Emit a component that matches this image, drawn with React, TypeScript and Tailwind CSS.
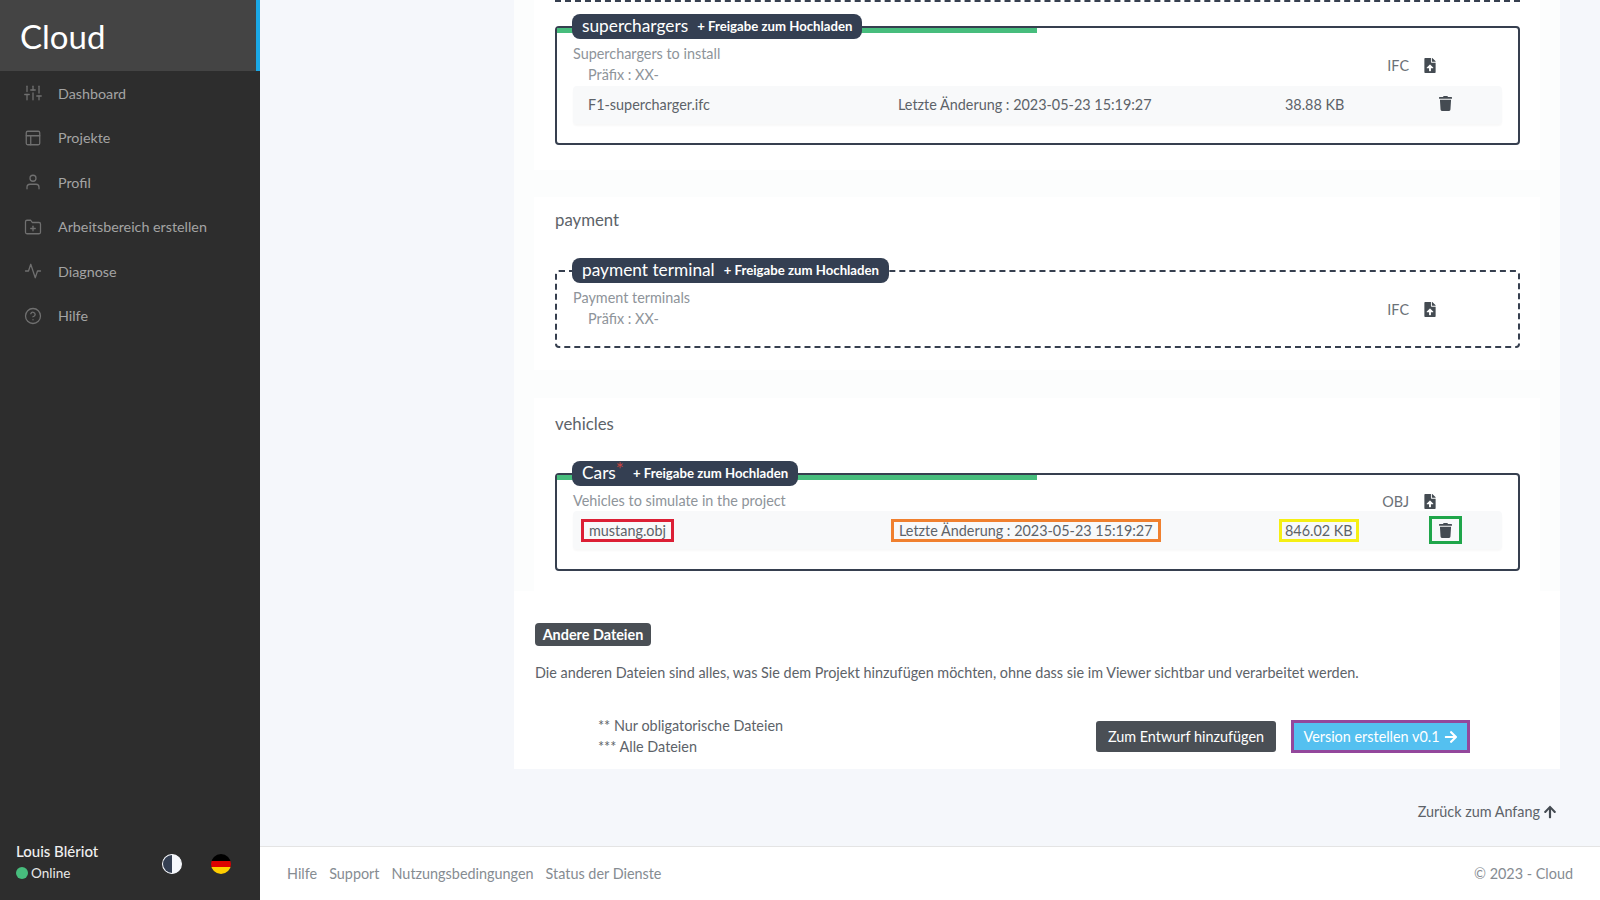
import { FiSliders, FiLayout, FiUser, FiFolderPlus, FiActivity, FiHelpCircle } from 'react-icons/fi';
import { FaFileUpload, FaArrowRight, FaArrowUp, FaTrash } from 'react-icons/fa';
import type { ReactNode } from 'react';

const navItems = [
  { label: 'Dashboard', icon: FiSliders },
  { label: 'Projekte', icon: FiLayout },
  { label: 'Profil', icon: FiUser },
  { label: 'Arbeitsbereich erstellen', icon: FiFolderPlus },
  { label: 'Diagnose', icon: FiActivity },
  { label: 'Hilfe', icon: FiHelpCircle },
];

const Sidebar = () => (
  <aside className="w-[260px] shrink-0 bg-[#2d2d2d] flex flex-col">
    <div className="h-[71px] shrink-0 bg-[#444444] border-r-4 border-[#1aa8e6] flex items-center pl-5">
      <span className="text-[33px] text-white pt-[2px]">Cloud</span>
    </div>
    <nav className="flex flex-col">
      {navItems.map((item) => (
        <div key={item.label} className="h-[44.5px] flex items-center pl-6 gap-[16px] text-[#a4a4a4] text-[14.3px]">
          <item.icon className="w-[18px] h-[18px] text-[#707070]" strokeWidth={1.7} />
          <span>{item.label}</span>
        </div>
      ))}
    </nav>
    <div className="mt-auto h-[64px] flex items-center pl-4 pb-2">
      <div className="w-[146px] pb-1 leading-[22px]">
        <div className="text-[15px] font-medium text-[#f0f0f0]">Louis Blériot</div>
        <div className="flex items-center gap-[3px] text-[13.5px] text-[#e8e8e8]">
          <span className="w-3 h-3 rounded-full bg-[#47bd7d]" />
          Online
        </div>
      </div>
      <svg viewBox="0 0 20 20" className="w-5 h-5">
        <circle cx="10" cy="10" r="9.4" fill="#f5f7fb" stroke="#f5f7fb" strokeWidth="1.2" />
        <path d="M10 1 A9 9 0 0 0 10 19 Z" fill="#343f52" />
      </svg>
      <div className="ml-[29px] w-5 h-5 rounded-full overflow-hidden flex flex-col">
        <div className="flex-1 bg-black" />
        <div className="flex-1 bg-[#dd0000]" />
        <div className="flex-1 bg-[#ffce00]" />
      </div>
    </div>
  </aside>
);

const Badge = ({ title, star }: { title: string; star?: boolean }) => (
  <div className="absolute left-[15px] -top-[14px] h-[25px] rounded-lg bg-[#343f52] text-white flex items-center px-[10px]">
    <span className="text-[17.3px] -mt-[1px]">
      {title}
      {star && <span className="inline-block -translate-y-[3px] text-[#c8443f] text-[19px] leading-none">*</span>}
    </span>
    <span className="ml-[9px] text-[13.2px] font-bold">+ Freigabe zum Hochladen</span>
  </div>
);

const FileRow = ({ children }: { children: ReactNode }) => (
  <div className="mx-4 h-[38px] flex items-center text-[14.4px] text-[#5d6369] bg-[#f8f9fa] rounded shadow-[0_2px_2px_rgba(0,0,0,0.03)] relative">
    {children}
  </div>
);

const UploadType = ({ type, top }: { type: string; top: string }) => (
  <div className={`absolute right-[82px] ${top} flex items-center text-[14.4px] text-[#6b7178]`}>
    <span>{type}</span>
    <FaFileUpload className="ml-[15px] w-3 h-[15px] text-[#444b52]" />
  </div>
);

const App = () => (
  <div className="w-[1600px] h-[900px] flex overflow-hidden bg-[#f5f7fb] font-['Lato','Noto_Sans',sans-serif]">
    <Sidebar />
    <div className="flex-1 flex flex-col">
      <main className="flex-1 pl-[254px] pr-[40px] flex flex-col">
        <div className="h-[769px] bg-white shrink-0 flex flex-col">
          <div className="bg-[#fcfdfd] h-[591px] shrink-0 px-5">
            {/* superchargers */}
            <section className="bg-white pl-[21px] pr-5 h-[170px]">
              <div className="border-b-2 border-dashed border-[#363f4f] h-[2px]" />
              <div className="mt-[24px] h-[119px] relative border-2 border-[#363f4f] rounded">
                <div className="absolute left-0 top-0 w-[480px] h-[5px] bg-[#47bd7d]" />
                <Badge title="superchargers" />
                <div className="pt-[15px] pl-[16px] text-[14.4px] text-[#8e949a] leading-[21px]">
                  <div>Superchargers to install</div>
                  <div className="pl-[15px]">Präfix : XX-</div>
                </div>
                <UploadType type="IFC" top="top-[27px]" />
                <div className="mt-[1px]">
                  <FileRow>
                    <span className="ml-[15px]">F1-supercharger.ifc</span>
                    <span className="absolute left-[325px]">Letzte Änderung : 2023-05-23 15:19:27</span>
                    <span className="absolute left-[712px]">38.88 KB</span>
                    <FaTrash className="absolute left-[866px] top-[10px] w-[13px] h-[15px] text-[#444b52]" />
                  </FileRow>
                </div>
              </div>
            </section>

            {/* payment */}
            <section className="bg-white pl-[21px] pr-5 mt-[27px] pt-3 h-[173px]">
              <h3 className="text-[16.8px] leading-[22px] text-[#5d6369]">payment</h3>
              <div className="mt-[39px] h-[78px] relative border-2 border-dashed border-[#363f4f] rounded">
                <Badge title="payment terminal" />
                <div className="pt-[15px] pl-[16px] text-[14.4px] text-[#8e949a] leading-[21px]">
                  <div>Payment terminals</div>
                  <div className="pl-[15px]">Präfix : XX-</div>
                </div>
                <UploadType type="IFC" top="top-[27px]" />
              </div>
            </section>

            {/* vehicles */}
            <section className="bg-white pl-[21px] pr-5 mt-[28px] pt-[15px] h-[193px]">
              <h3 className="text-[16.8px] leading-[22px] text-[#5d6369]">vehicles</h3>
              <div className="mt-[38px] h-[98px] relative border-2 border-[#363f4f] rounded">
                <div className="absolute left-0 top-0 w-[480px] h-[5px] bg-[#47bd7d]" />
                <Badge title="Cars" star />
                <div className="pt-[16px] pl-[16px] text-[14.4px] text-[#8e949a] leading-[20px]">
                  <div>Vehicles to simulate in the project</div>
                </div>
                <UploadType type="OBJ" top="top-[16px]" />
                <FileRow>
                  <span className="absolute left-[8px] px-[5px] border-[3px] border-[#dc1f35] leading-[17px]">mustang.obj</span>
                  <span className="absolute left-[318px] px-[5px] border-[3px] border-[#f0802f] leading-[17px]">Letzte Änderung : 2023-05-23 15:19:27</span>
                  <span className="absolute left-[706px] px-[3px] border-[3px] border-[#f5ef14] leading-[17px]">846.02 KB</span>
                  <span className="absolute left-[856px] w-[33px] h-[28px] border-[3px] border-[#1fa64a] flex items-center justify-center">
                    <FaTrash className="w-[13px] h-[15px] text-[#444b52]" />
                  </span>
                </FileRow>
              </div>
            </section>
          </div>

          <div className="ml-[21px] mt-[32px] h-[23px] w-[116px] rounded bg-[#4a4f55] text-white text-[14.4px] font-bold flex items-center justify-center shrink-0">Andere Dateien</div>
          <p className="ml-[21px] mt-[16px] text-[14.4px] leading-[22px] text-[#5d6369] shrink-0">
            Die anderen Dateien sind alles, was Sie dem Projekt hinzufügen möchten, ohne dass sie im Viewer sichtbar und verarbeitet werden.
          </p>
          <div className="mt-[31px] flex items-start shrink-0">
            <div className="ml-[84px] text-[14.4px] leading-[21px] text-[#5d6369]">
              <div>** Nur obligatorische Dateien</div>
              <div>*** Alle Dateien</div>
            </div>
            <div className="ml-auto mr-[90px] mt-[5px] flex items-center gap-[15px]">
              <button className="h-[31px] w-[180px] rounded-[3px] bg-[#4a4f55] text-white text-[14.4px]">Zum Entwurf hinzufügen</button>
              <button className="h-[33px] w-[179px] border-[3px] border-[#93479c] bg-[#54c0f0] text-white text-[14.4px] flex items-center justify-center gap-1">
                Version erstellen v0.1
                <FaArrowRight className="w-[14px] h-[14px]" />
              </button>
            </div>
          </div>
        </div>
        <div className="mt-[32px] self-end flex items-center gap-[3px] text-[14.4px] text-[#5d6369] -translate-x-[3px]">
          Zurück zum Anfang
          <FaArrowUp className="w-[14px] h-[14px] text-[#444b52]" />
        </div>
      </main>
      <footer className="h-[54px] shrink-0 bg-white border-t border-[#e4e4e4] px-[27px] flex items-center text-[14.4px] text-[#868c92]">
        <div className="flex gap-3">
          <span>Hilfe</span>
          <span>Support</span>
          <span>Nutzungsbedingungen</span>
          <span>Status der Dienste</span>
        </div>
        <span className="ml-auto">© 2023 - Cloud</span>
      </footer>
    </div>
  </div>
);

export default App;
